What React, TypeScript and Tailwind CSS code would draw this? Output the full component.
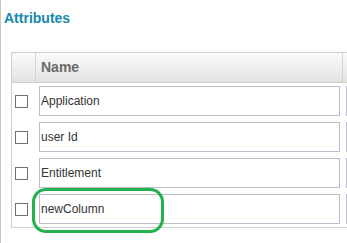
const rows = ["Application", "user Id", "Entitlement", "newColumn"];

export default function App() {
  return (
    <div className="relative h-[243px] w-[347px] overflow-hidden border-l border-[#c8c8c8] bg-white font-['Liberation_Sans',Arial,sans-serif]">
      <h2 className="pl-[3px] pt-[10px] text-[14px] font-bold leading-[16px] text-[#1588ad]">Attributes</h2>

      <div className="ml-[10px] mt-[26px] w-[420px] border border-[#cfcfcf]">
        {/* header */}
        <div className="flex h-[30px] border-b border-[#cfcfcf] bg-gradient-to-b from-[#fbfbfb] to-[#e2e2e2]">
          <div className="w-[24px] border-r border-[#d4d4d4]" />
          <div className="flex w-[307px] items-center border-r border-[#d4d4d4] pl-[5px] text-[14px] font-bold text-[#6a6a6a]">
            Name
          </div>
          <div className="flex-1" />
        </div>

        {/* rows */}
        {rows.map((r) => (
          <div key={r} className="flex h-[36px] items-center">
            <div className="flex w-[25px] justify-start pl-[3px]">
              <span className="block h-[13px] w-[13px] border border-[#6f6f6f] bg-white" />
            </div>
            <div className="w-[307px] pl-[2px] pr-[4px]">
              <div className="flex h-[30px] items-center border border-[#bcbccc] pl-[1px] text-[12px] text-[#333]">
                {r}
              </div>
            </div>
            <div className="flex-1 pl-[2px]">
              <div className="h-[30px] border border-[#bcbccc]" />
            </div>
          </div>
        ))}
      </div>

      {/* annotation */}
      <div className="absolute left-[31px] top-[188px] h-[45px] w-[132px] rounded-[14px] border-[3px] border-[#22b14c]" />
    </div>
  );
}
